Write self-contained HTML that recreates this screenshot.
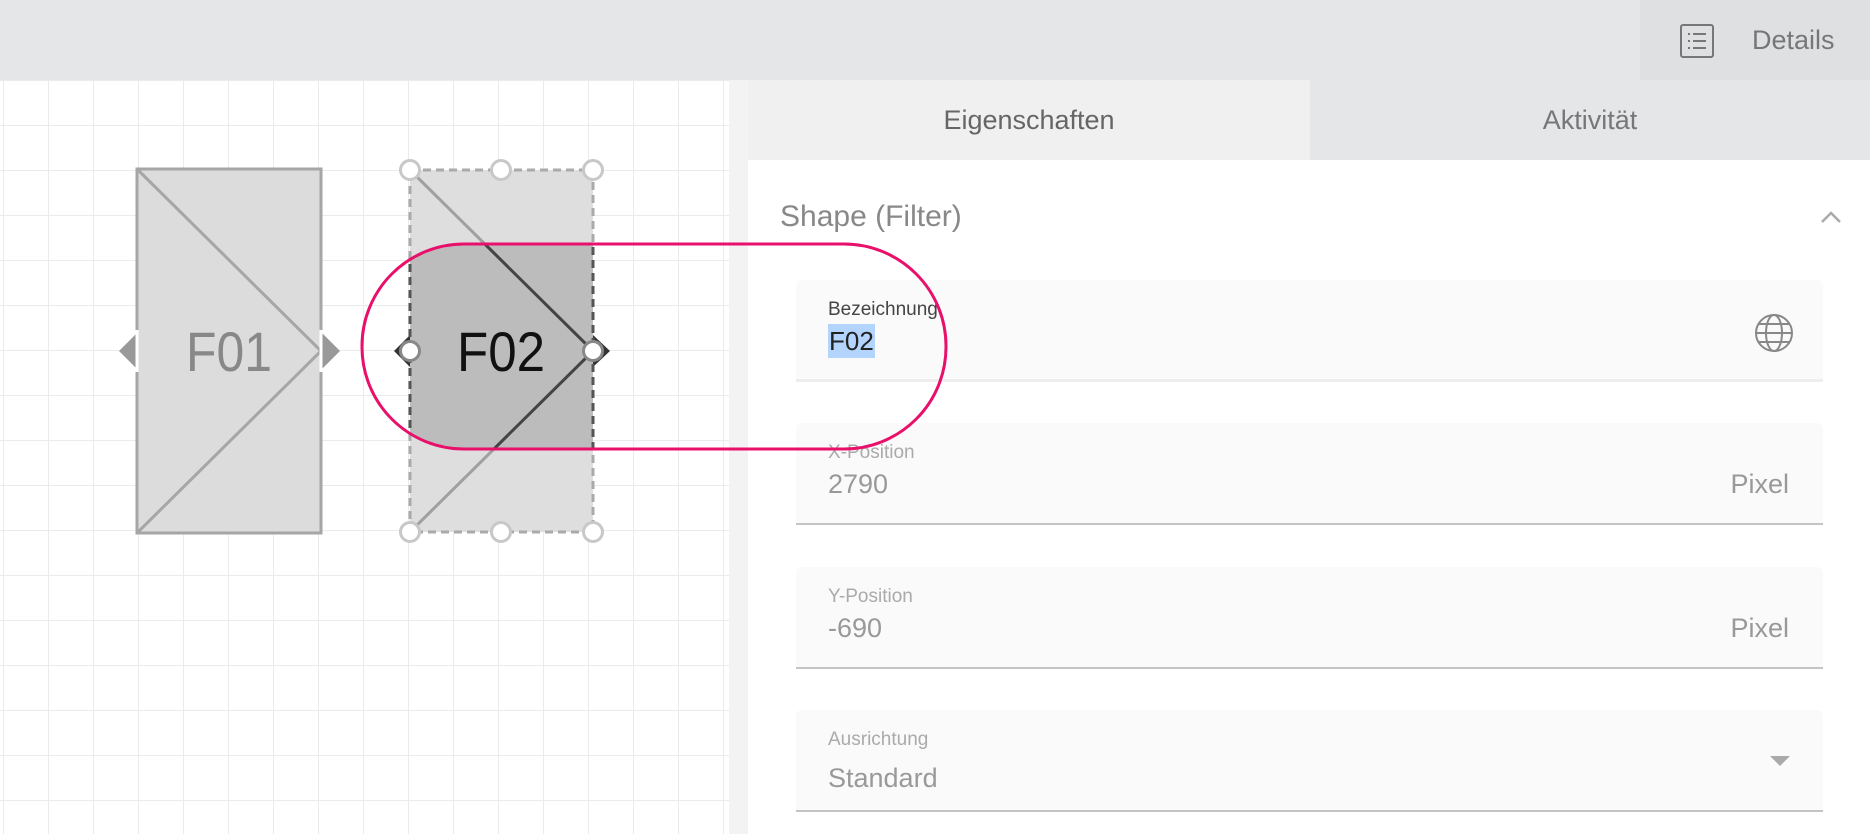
<!DOCTYPE html>
<html><head><meta charset="utf-8"><style>
*{margin:0;padding:0;box-sizing:border-box}
body{width:1870px;height:834px;overflow:hidden;background:#fff;font-family:"Liberation Sans",sans-serif;position:relative}
.top{position:absolute;left:0;top:0;width:1870px;height:80px;background:#e5e6e8}
.det{position:absolute;left:1640px;top:0;width:230px;height:80px;background:#dfe0e2}
.det span{position:absolute;left:112px;top:25px;font-size:27px;color:#777}
.canvas{position:absolute;left:0;top:80px;width:729px;height:754px;background-color:#fff;
background-image:linear-gradient(to right,#ebebeb 1px,transparent 1px),linear-gradient(to bottom,#ebebeb 1px,transparent 1px);
background-size:45px 45px;background-position:3px 0}
.strip{position:absolute;left:729px;top:80px;width:19px;height:754px;background:#f3f3f3}
.tab1{position:absolute;left:748px;top:80px;width:562px;height:80px;background:#f0f0f0;color:#666;font-size:27px;text-align:center;line-height:80px}
.tab2{position:absolute;left:1310px;top:80px;width:560px;height:80px;background:#e5e6e8;color:#777;font-size:27px;text-align:center;line-height:80px}
.h{position:absolute;left:780px;top:200px;font-size:30px;color:#888}
.f{position:absolute;left:796px;width:1027px;height:102px;background:#fafafa;border-radius:6px 6px 0 0;border-bottom:2px solid #c4c4c4}
.f .l{position:absolute;left:32px;top:19px;font-size:19px;color:#aaa}
.f .v{position:absolute;left:32px;top:46px;font-size:27px;color:#999}
.f .u{position:absolute;right:34px;top:46px;font-size:27px;color:#999}
</style></head><body>
<div class="top"></div>
<div class="det">
<svg style="position:absolute;left:40px;top:24px" width="34" height="34" viewBox="0 0 34 34"><rect x="1" y="1" width="32" height="32" rx="2" fill="none" stroke="#777" stroke-width="2"/><g fill="#777"><rect x="8" y="9" width="2" height="2"/><rect x="8" y="16" width="2" height="2"/><rect x="8" y="23" width="2" height="2"/><rect x="13" y="9" width="13" height="2"/><rect x="13" y="16" width="13" height="2"/><rect x="13" y="23" width="13" height="2"/></g></svg>
<span>Details</span></div>
<div class="canvas"></div>
<div class="strip"></div>
<div class="tab1">Eigenschaften</div>
<div class="tab2">Aktivität</div>
<div class="h">Shape (Filter)</div>
<svg style="position:absolute;left:1819px;top:209px" width="24" height="16"><path d="M3 13 L12 4 L21 13" fill="none" stroke="#aaa" stroke-width="2.5"/></svg>

<div class="f" style="top:280px;border-bottom:3px solid #eee">
<div class="l" style="color:#444;font-size:19px">Bezeichnung</div>
<div class="v" style="color:#222;background:#b3d4fc;padding:0 1px;top:44px;line-height:34px;font-size:26px">F02</div>
<svg style="position:absolute;left:958px;top:33px" width="40" height="40" viewBox="0 0 40 40" fill="none" stroke="#888" stroke-width="2"><circle cx="20" cy="20" r="18"/><ellipse cx="20" cy="20" rx="8" ry="18"/><line x1="2" y1="20" x2="38" y2="20"/><path d="M5 11 H35 M5 29 H35"/></svg>
</div>
<div class="f" style="top:423px"><div class="l">X-Position</div><div class="v">2790</div><div class="u">Pixel</div></div>
<div class="f" style="top:567px"><div class="l">Y-Position</div><div class="v">-690</div><div class="u">Pixel</div></div>
<div class="f" style="top:710px"><div class="l">Ausrichtung</div><div class="v" style="top:53px">Standard</div>
<svg style="position:absolute;left:974px;top:46px" width="20" height="12"><path d="M0 0 H20 L10 10Z" fill="#aaa"/></svg></div>

<svg style="position:absolute;left:0;top:0" width="1870" height="834" viewBox="0 0 1870 834">
<defs><clipPath id="pc"><rect x="362" y="244" width="590" height="205" rx="102"/></clipPath></defs>
<path d="M119 351 L137 333 L137 369Z" fill="#999"/>
<path d="M340 351 L322 333 L322 369Z" fill="#999"/>
<rect x="137" y="169" width="184" height="364" fill="#dcdcdc" stroke="#a6a6a6" stroke-width="3"/>
<path d="M137 169 L321 351 L137 533" fill="none" stroke="#a6a6a6" stroke-width="3"/>
<line x1="137" y1="330" x2="137" y2="372" stroke="#fff" stroke-width="3"/>
<line x1="321" y1="330" x2="321" y2="372" stroke="#fff" stroke-width="3"/>
<text x="229" y="371" font-size="56" fill="#888" text-anchor="middle" font-family="Liberation Sans" textLength="86" lengthAdjust="spacingAndGlyphs">F01</text>
<path d="M394 351 L410 335 L410 367Z" fill="#333"/>
<path d="M610 351 L593 335 L593 367Z" fill="#333"/>
<rect x="410" y="170" width="183" height="362" fill="#dedede"/>
<g clip-path="url(#pc)"><rect x="410" y="170" width="183" height="362" fill="#bcbcbc"/></g>
<path d="M410 170 L593 351 L410 532" fill="none" stroke="#a0a0a0" stroke-width="3"/>
<g clip-path="url(#pc)"><path d="M410 170 L593 351 L410 532" fill="none" stroke="#444" stroke-width="3"/></g>
<rect x="410" y="170" width="183" height="362" fill="none" stroke="#aaa" stroke-width="3" stroke-dasharray="8 5"/>
<g clip-path="url(#pc)"><rect x="410" y="170" width="183" height="362" fill="none" stroke="#555" stroke-width="3" stroke-dasharray="8 5"/></g>
<text x="501" y="371" font-size="56" fill="#111" text-anchor="middle" font-family="Liberation Sans" textLength="88" lengthAdjust="spacingAndGlyphs">F02</text>
<g fill="#fff" stroke="#c8c8c8" stroke-width="3">
<circle cx="410" cy="170" r="9.5"/><circle cx="501" cy="170" r="9.5"/><circle cx="593" cy="170" r="9.5"/>
<circle cx="410" cy="532" r="9.5"/><circle cx="501" cy="532" r="9.5"/><circle cx="593" cy="532" r="9.5"/>
</g>
<g fill="#fff" stroke="#888" stroke-width="3"><circle cx="410" cy="351" r="9.5"/><circle cx="593" cy="351" r="9.5"/></g>
<rect x="362" y="244" width="584" height="205" rx="102" fill="none" stroke="#e8106a" stroke-width="3"/>
</svg>
</body></html>
